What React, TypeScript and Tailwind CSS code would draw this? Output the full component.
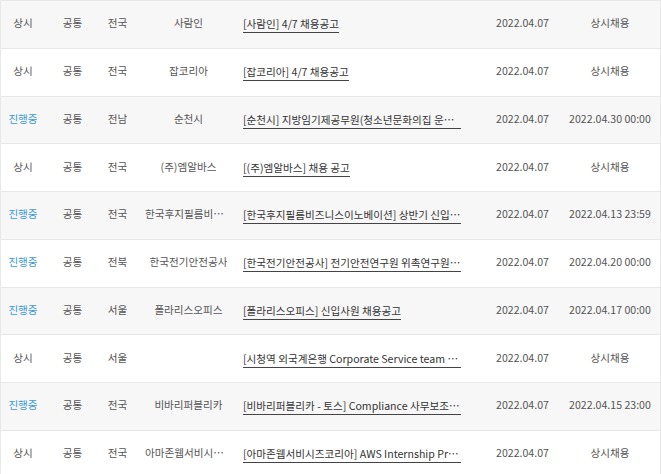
import React from 'react';

type Job = {
  status: '상시' | '진행중';
  type: string;
  region: string;
  company: string;
  title: string;
  posted: string;
  deadline: string;
};

const jobs: Job[] = [
  { status: '상시', type: '공통', region: '전국', company: '사람인', title: '[사람인] 4/7 채용공고', posted: '2022.04.07', deadline: '상시채용' },
  { status: '상시', type: '공통', region: '전국', company: '잡코리아', title: '[잡코리아] 4/7 채용공고', posted: '2022.04.07', deadline: '상시채용' },
  { status: '진행중', type: '공통', region: '전남', company: '순천시', title: '[순천시] 지방임기제공무원(청소년문화의집 운영 담당) 채용 공고', posted: '2022.04.07', deadline: '2022.04.30 00:00' },
  { status: '상시', type: '공통', region: '전국', company: '(주)엠알바스', title: '[(주)엠알바스] 채용 공고', posted: '2022.04.07', deadline: '상시채용' },
  { status: '진행중', type: '공통', region: '전국', company: '한국후지필름비즈니스이노베이션', title: '[한국후지필름비즈니스이노베이션] 상반기 신입사원 채용', posted: '2022.04.07', deadline: '2022.04.13 23:59' },
  { status: '진행중', type: '공통', region: '전북', company: '한국전기안전공사', title: '[한국전기안전공사] 전기안전연구원 위촉연구원 채용', posted: '2022.04.07', deadline: '2022.04.20 00:00' },
  { status: '진행중', type: '공통', region: '서울', company: '폴라리스오피스', title: '[폴라리스오피스] 신입사원 채용공고', posted: '2022.04.07', deadline: '2022.04.17 00:00' },
  { status: '상시', type: '공통', region: '서울', company: '', title: '[시청역 외국계은행 Corporate Service team 채용]', posted: '2022.04.07', deadline: '상시채용' },
  { status: '진행중', type: '공통', region: '전국', company: '비바리퍼블리카', title: '[비바리퍼블리카 - 토스] Compliance 사무보조 채용', posted: '2022.04.07', deadline: '2022.04.15 23:00' },
  { status: '상시', type: '공통', region: '전국', company: '아마존웹서비시즈코리아', title: '[아마존웹서비시즈코리아] AWS Internship Program', posted: '2022.04.07', deadline: '상시채용' },
];

const cell = 'flex items-center justify-center';

export default function App() {
  return (
    <div
      className="w-[661px] h-[474px] overflow-hidden bg-white text-[10.6px] text-[#555]"
      style={{ fontFamily: '"Noto Sans CJK KR", "Noto Sans", sans-serif' }}
    >
      <div className="border-t border-l border-r border-[#e8e8e8]">
        {jobs.map((job, i) => (
          <div
            key={i}
            className={`grid grid-cols-[44px_55px_35px_107px_234px_93px_82px_1fr] h-[47.75px] border-b border-[#e8e8e8] ${
              i % 2 === 0 ? 'bg-[#f7f7f7]' : 'bg-white'
            }`}
          >
            <div className={`${cell} pb-[2px] ${job.status === '진행중' ? 'text-[#3d9ad8]' : ''}`}>{job.status}</div>
            <div className={`${cell} pb-[2px]`}>{job.type}</div>
            <div className={`${cell} pb-[2px]`}>{job.region}</div>
            <div className={`${cell} pb-[2px] px-[10px] min-w-0`}>
              <span className="truncate">{job.company}</span>
            </div>
            <div className="flex items-center pl-[1px] min-w-0">
              <span className="inline-block max-w-[218px] truncate border-b border-[#444] leading-[17px] text-[#333]">
                {job.title}
              </span>
            </div>
            <div className={`${cell} pb-[2px]`}>{job.posted}</div>
            <div className={`${cell} pb-[2px] whitespace-nowrap`}>{job.deadline}</div>
            <div />
          </div>
        ))}
      </div>
    </div>
  );
}
